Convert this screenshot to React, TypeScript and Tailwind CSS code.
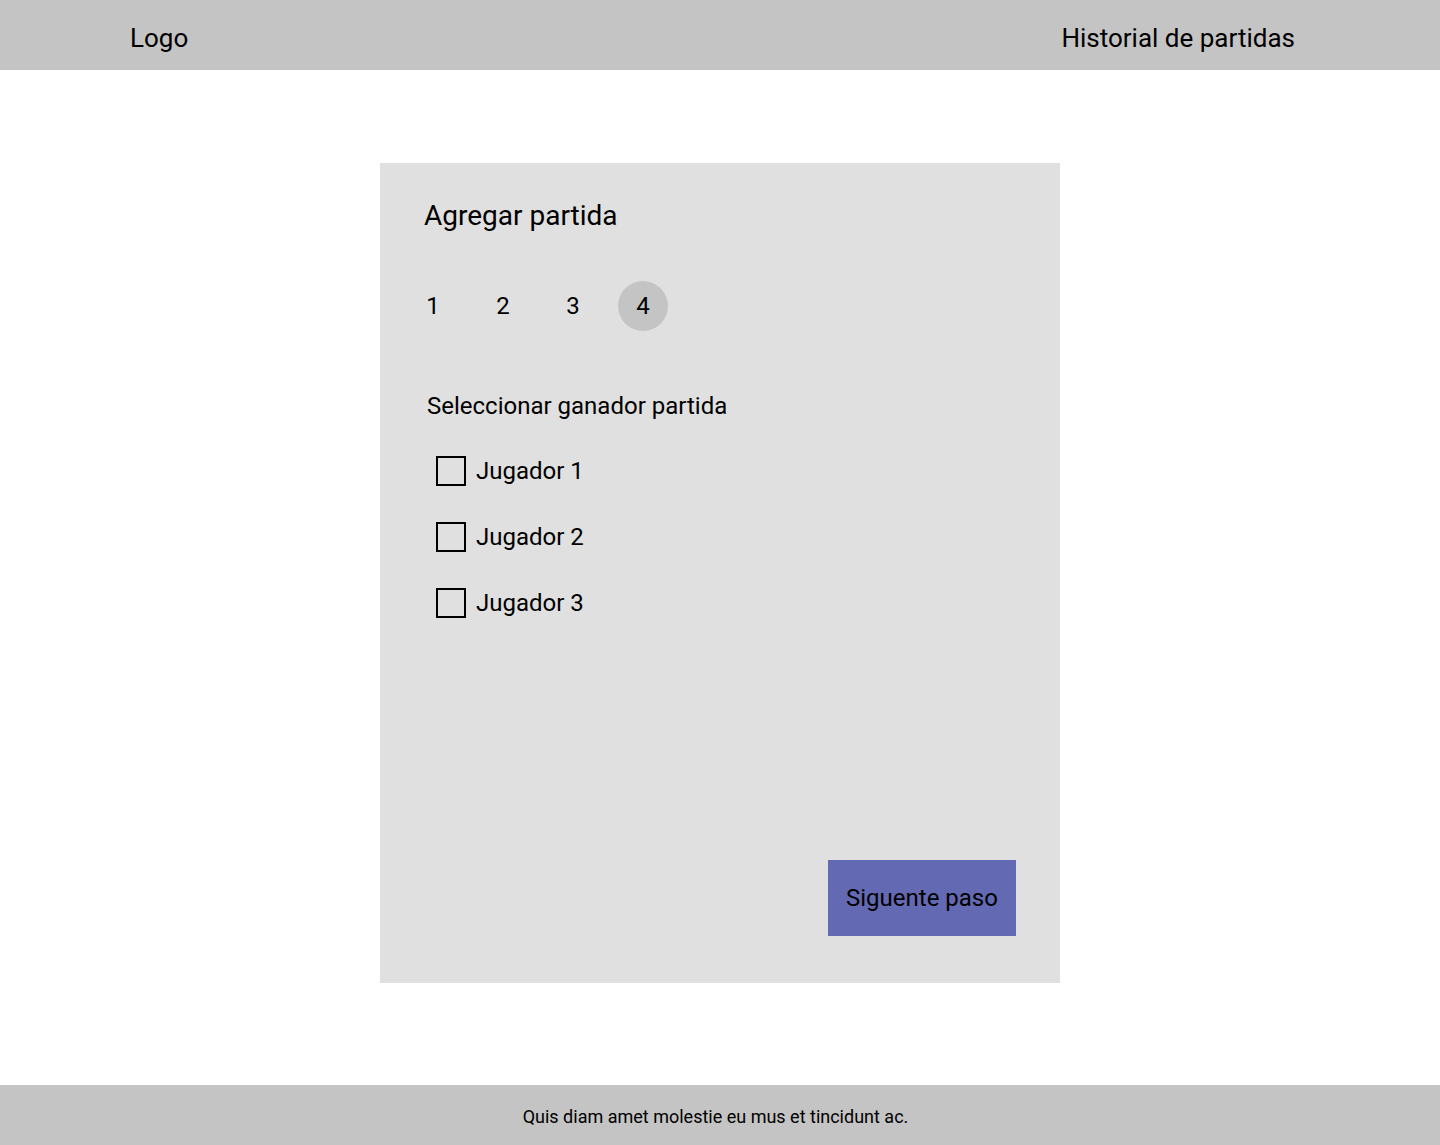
const players = ["Jugador 1", "Jugador 2", "Jugador 3"];
const steps = [1, 2, 3, 4];

const App = () => {
  const current = 4;

  return (
    <div className="min-h-[1145px] flex flex-col bg-white text-black font-['Roboto',sans-serif]">
      <header className="h-[70px] flex items-center justify-between pl-[130px] pr-[145px] pt-[6px] bg-[#c4c4c4]">
        <span className="text-[26px]">Logo</span>
        <span className="text-[26px]">Historial de partidas</span>
      </header>

      <main className="flex-1 flex justify-center pt-[93px]">
        <div className="w-[680px] h-[820px] flex flex-col px-[44px] pt-[38px] pb-[47px] bg-[#e0e0e0]">
          <h1 className="text-[28px] leading-[30px]">Agregar partida</h1>

          <div className="mt-[50px] -ml-[16px] flex gap-[20px]">
            {steps.map((s) => (
              <div
                key={s}
                className={
                  s === current
                    ? "w-[50px] h-[50px] rounded-full flex items-center justify-center text-[24px] bg-[#c4c4c4]"
                    : "w-[50px] h-[50px] rounded-full flex items-center justify-center text-[24px]"
                }
              >
                {s}
              </div>
            ))}
          </div>

          <p className="mt-[61px] ml-[3px] text-[24px] leading-[28px]">
            Seleccionar ganador partida
          </p>

          <div className="mt-[36px] ml-[12px] flex flex-col gap-[36px]">
            {players.map((p) => (
              <label key={p} className="flex items-center gap-[10px] h-[30px]">
                <span className="w-[30px] h-[30px] border-2 border-black" />
                <span className="text-[24px]">{p}</span>
              </label>
            ))}
          </div>

          <button className="mt-auto self-end w-[188px] h-[76px] bg-[#636ab3] text-[24px]">
            Siguente paso
          </button>
        </div>
      </main>

      <footer className="mt-[102px] h-[60px] flex items-center justify-center pt-[3px] pr-[9px] bg-[#c4c4c4]">
        <p className="text-[18px]">Quis diam amet molestie eu mus et tincidunt ac.</p>
      </footer>
    </div>
  );
};
export default App;
